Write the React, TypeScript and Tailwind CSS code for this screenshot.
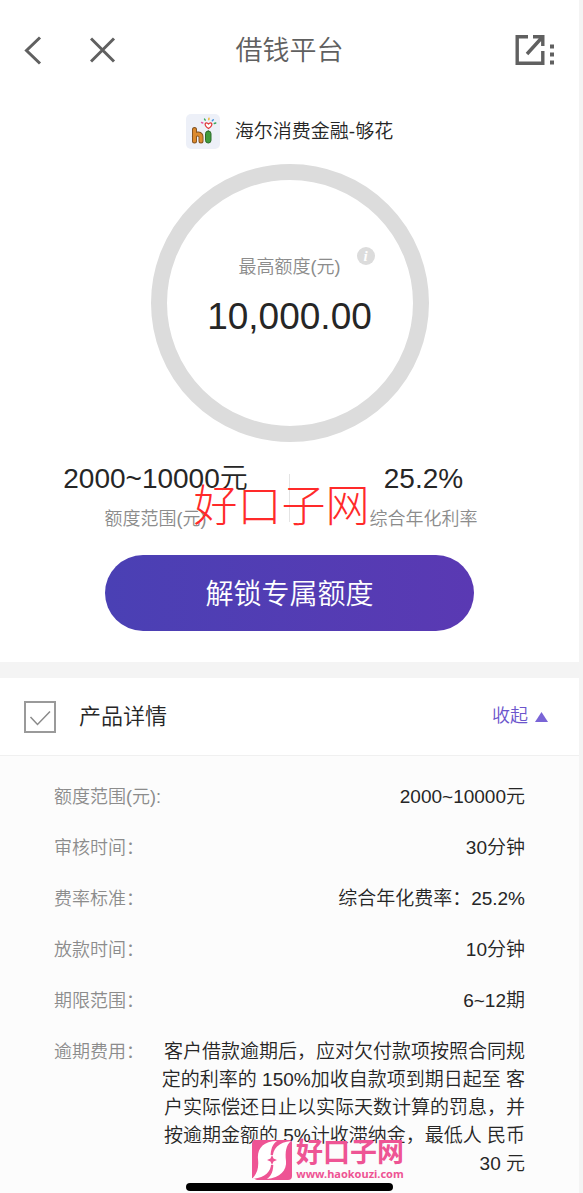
import { useState } from "react";

const rows = [
  { label: "额度范围(元):", value: "2000~10000元" },
  { label: "审核时间：", value: "30分钟" },
  { label: "费率标准：", value: "综合年化费率：25.2%" },
  { label: "放款时间：", value: "10分钟" },
  { label: "期限范围：", value: "6~12期" },
];

const overdueLines = [
  "客户借款逾期后，应对欠付款项按照合同规",
  "定的利率的 150%加收自款项到期日起至 客",
  "户实际偿还日止以实际天数计算的罚息，并",
  "按逾期金额的 5%计收滞纳金，最低人 民币",
  "30 元",
];

function TopBar() {
  return (
    <header className="flex h-[102px] items-center justify-between px-6 text-[#606060]">
      <div className="flex w-[92px] items-center justify-between">
        <button type="button" aria-label="返回">
          <svg width="18" height="30" viewBox="0 0 18 30" fill="none" stroke="currentColor" strokeWidth="3">
            <path d="M16 1.500 2.500 14.500l13.500 13" />
          </svg>
        </button>
        <button type="button" aria-label="关闭">
          <svg width="26" height="30" viewBox="0 0 26 30" fill="none" stroke="currentColor" strokeWidth="3">
            <path d="M1 2.500l23 23M24 2.500 1 25.500" />
          </svg>
        </button>
      </div>
      <h1 className="text-[27px] font-[350]">借钱平台</h1>
      <div className="flex w-[92px] justify-end">
        <button type="button" aria-label="更多">
          <svg width="40" height="32" viewBox="0 0 40 32" fill="none" stroke="currentColor" strokeWidth="3.400">
            <path d="M13 1.700H2.200v26.600h25.600V16M18 1.700h9.800V11M27 2.500 12 19" />
            <path d="M35 11.500h4M35 19.500h4M35 27.500h4" strokeWidth="4" />
          </svg>
        </button>
      </div>
    </header>
  );
}

function BrandIcon() {
  return (
    <svg width="34" height="35" viewBox="0 0 34 35" fill="none" strokeLinecap="round" strokeLinejoin="round">
      <rect width="34" height="35" rx="5" fill="#edf0f8" />
      <path d="M8.500 15.500v11.500M8.500 22c1.500-3 6.500-2.500 6.500 1v4" stroke="#80501f" strokeWidth="5" />
      <path d="M8.500 15.500v11.500M8.500 22c1.500-3 6.500-2.500 6.500 1v4" stroke="#dc8a2e" strokeWidth="3.200" />
      <rect x="19.500" y="17" width="5.500" height="12" rx="2.700" fill="#3f9b3c" stroke="#2d6a2b" />
      <path d="M22.500 14.500c-6-4-2.500-7.500 0-4.500 2.500-3 6 .500 0 4.500Z" fill="#fff" stroke="#e0393b" strokeWidth="1.300" />
      <path d="m15.500 8.500 1.300.500" stroke="#e75aa0" strokeWidth="1.400" />
      <path d="m18.500 5 .700 1.200" stroke="#35a85a" strokeWidth="1.400" />
      <path d="m23 4.200-.2 1.500" stroke="#f0b429" strokeWidth="1.400" />
      <path d="m27.300 5.700-1 1.100" stroke="#3b8edb" strokeWidth="1.400" />
      <path d="m29.800 9-1.500.500" stroke="#35a85a" strokeWidth="1.400" />
    </svg>
  );
}

function SiteLogo() {
  return (
    <svg width="40" height="40" viewBox="0 0 40 40">
      <path d="M3 0h34q3 0 3 3v33q0 4-4 4H5L0 38V4Q0 0 3 0Z" fill="#ee5494" />
      <g fill="#fff">
        <path d="M25 1C11 1 5 9 6 19 7 28 5 34 0 39 13 38 20 31 19 22 18 13 19 5 25 1Z" />
        <path d="M39 1C27 2 20 9 21 18 22 27 21 35 15 39 28 38 35 30 34 21 33 12 34 5 39 1Z" />
        <path d="M16 15h8v10h-8Z" />
      </g>
      <path d="m20 15 1.500 3.500 3.500 1.500-3.500 1.500L20 25l-1.500-3.500L15 20l3.500-1.500Z" fill="#ee5494" />
    </svg>
  );
}

export default function App() {
  const [open, setOpen] = useState(true);
  const [checked, setChecked] = useState(true);

  return (
    <div className="relative min-h-screen overflow-hidden bg-[#f4f4f4] pr-1 font-['Liberation_Sans','Noto_Sans_CJK_SC',sans-serif] text-[18px] text-[#262626]">
      <section className="bg-white pb-[31px]">
        <TopBar />
        <div className="flex h-[62px] items-center justify-center gap-[15px] pb-[3px]">
          <BrandIcon />
          <span className="pt-px text-[19px] font-[350]">海尔消费金融-够花</span>
        </div>

        <div className="relative mx-auto flex size-[278px] flex-col items-center rounded-full border-16 border-[#dcdcdc] pt-[73px]">
          <span className="font-[350] leading-7 text-[#8c8c8c]">最高额度(元)</span>
          <strong className="mt-2 text-[37px] font-normal leading-[56px]">10,000.00</strong>
          <button
            type="button"
            aria-label="额度说明"
            className="absolute right-[38px] top-[67px] size-[18px] rounded-full bg-[#dcdcdc] font-['Liberation_Serif',serif] text-[15px] font-bold italic leading-[18px] text-white"
          >
            i
          </button>
        </div>

        <div className="relative mt-4 flex px-[22px]">
          <div className="flex flex-1 flex-col items-center">
            <span className="text-[28px] font-[350] leading-[42px]">2000~10000元</span>
            <span className="font-[350] leading-[38px] text-[#8c8c8c]">额度范围(元)</span>
          </div>
          <div className="my-4 w-px bg-[#e4e4e4]" />
          <div className="flex flex-1 flex-col items-center">
            <span className="text-[28px] font-[350] leading-[42px]">25.2%</span>
            <span className="font-[350] leading-[38px] text-[#8c8c8c]">综合年化利率</span>
          </div>
          <div className="pointer-events-none absolute inset-x-0 top-[17px] pr-4 text-center text-[44px] font-light leading-[64px] text-[#ff2a2a]">
            好口子网
          </div>
        </div>

        <div className="mt-[17px] px-[105px]">
          <button
            type="button"
            className="h-[76px] w-full rounded-full bg-linear-to-r from-[#4a40b4] to-[#5a39b3] pt-1 text-[28px] font-[350] text-white"
          >
            解锁专属额度
          </button>
        </div>
      </section>

      <section className="mt-4 bg-[#fcfcfc]">
        <div className="flex h-[78px] items-center justify-between border-b border-[#f0f0f0] bg-white pl-6 pr-[31px]">
          <label className="flex items-center gap-[23px]">
            <span className="relative flex size-8">
              <input
                type="checkbox"
                checked={checked}
                onChange={(e) => setChecked(e.target.checked)}
                className="size-8 appearance-none border-2 border-[#9a9a9a] bg-white"
              />
              {checked && (
                <svg className="pointer-events-none absolute inset-0" width="32" height="32" viewBox="0 0 32 32" fill="none" stroke="#8a8a8a" strokeWidth="1.500">
                  <path d="m6.500 16 7 7.500L26 10.500" />
                </svg>
              )}
            </span>
            <span className="text-[22px] font-[350]">产品详情</span>
          </label>
          <button
            type="button"
            aria-expanded={open}
            onClick={() => setOpen(!open)}
            className="flex items-center gap-[7px] font-[350] text-[#6c55cc]"
          >
            收起
            <svg width="13" height="10" viewBox="0 0 13 10" fill="#7964d6">
              <path d="M6.500 0 13 10H0Z" />
            </svg>
          </button>
        </div>

        {open && (
          <dl className="flex flex-col gap-[23px] px-[54px] pb-[17px] pt-[27px] font-[350] leading-7">
            {rows.map((row) => (
              <div key={row.label} className="flex justify-between">
                <dt className="text-[#8c8c8c]">{row.label}</dt>
                <dd className="text-[19px]">{row.value}</dd>
              </div>
            ))}
            <div className="flex justify-between">
              <dt className="text-[#8c8c8c]">逾期费用：</dt>
              <dd className="text-right text-[19px]">
                {overdueLines.map((line) => (
                  <span key={line} className="block whitespace-nowrap">
                    {line}
                  </span>
                ))}
              </dd>
            </div>
          </dl>
        )}
      </section>

      <div className="absolute bottom-[14px] left-[252px] flex items-center gap-1 text-[#ee5494]">
        <SiteLogo />
        <div className="flex flex-col items-center">
          <span className="text-[27px] font-bold leading-7">好口子网</span>
          <a href="#" className="font-['Noto_Sans',sans-serif] text-[11px] font-bold leading-[14px]">
            www.haokouzi.com
          </a>
        </div>
      </div>
      <div className="absolute inset-x-0 bottom-1 flex justify-center pr-1">
        <div className="h-2 w-[207px] rounded-full bg-black" />
      </div>
    </div>
  );
}
